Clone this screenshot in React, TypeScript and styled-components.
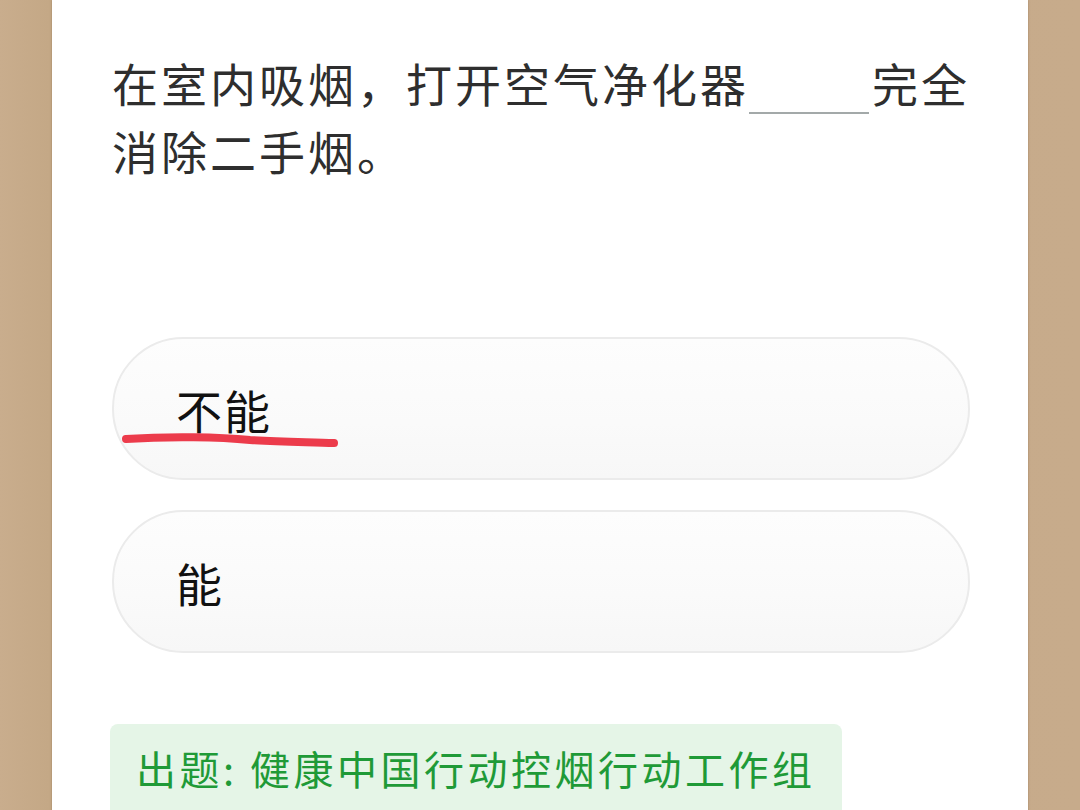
import React from "react";
import styled, { createGlobalStyle } from "styled-components";

const Global = createGlobalStyle`
  html, body { margin: 0; padding: 0; }
  body {
    background: #c7ab8b;
    font-family: "Noto Sans CJK SC", "Noto Sans", sans-serif;
    overflow: hidden;
  }
`;

const Page = styled.div`
  width: 1080px;
  height: 810px;
  display: flex;
  justify-content: center;
  background: linear-gradient(90deg, #c9ad8d 0%, #c4a886 4.5%, #c7ab8b 100%);
  overflow: hidden;
`;

const Panel = styled.main`
  width: 976px;
  height: 900px;
  box-sizing: border-box;
  background: #ffffff;
  padding: 48px 58px 0 60px;
  display: flex;
  flex-direction: column;
  box-shadow: 0 0 2px rgba(120, 90, 60, 0.5);
`;

const Question = styled.p`
  margin: 0 -12px 0 0;
  font-size: 46px;
  line-height: 68px;
  letter-spacing: 3px;
  color: #2e2e2e;
`;

const Blank = styled.span`
  display: inline-block;
  width: 120px;
  height: 2px;
  margin: 0 3px 0 0;
  background: #a3a9a9;
  vertical-align: -12px;
`;

const Options = styled.div`
  margin-top: 153px;
  display: flex;
  flex-direction: column;
  gap: 30px;
`;

const Option = styled.div`
  position: relative;
  height: 143px;
  box-sizing: border-box;
  border: 2px solid #ebebeb;
  border-radius: 72px;
  background: linear-gradient(180deg, #fdfdfd 0%, #fafafa 60%, #f7f7f7 100%);
  display: flex;
  align-items: center;
  padding-left: 62px;
  font-size: 46px;
  letter-spacing: 2px;
  color: #111111;
`;

const Mark = styled.svg`
  position: absolute;
  left: 6px;
  top: 94px;
  width: 230px;
  height: 24px;
  overflow: visible;
`;

const Source = styled.div`
  margin-top: 71px;
  margin-left: -2px;
  align-self: flex-start;
  background: #e5f5e7;
  border-radius: 8px;
  padding: 20px 26px 30px 26px;
  font-size: 40px;
  line-height: 48px;
  letter-spacing: 3.5px;
  color: #1f9a37;
`;

export default function App() {
  return (
    <>
      <Global />
      <Page>
        <Panel>
          <Question>
            在室内吸烟，打开空气净化器<Blank />完全消除二手烟。
          </Question>
          <Options>
            <Option>
              不能
              <Mark viewBox="0 0 230 24">
                <path
                  d="M6 6 C 50 3, 100 4, 130 7 C 160 9, 190 9, 214 10"
                  stroke="#ec3b4b"
                  strokeWidth="8"
                  strokeLinecap="round"
                  fill="none"
                />
              </Mark>
            </Option>
            <Option>能</Option>
          </Options>
          <Source>出题: 健康中国行动控烟行动工作组</Source>
        </Panel>
      </Page>
    </>
  );
}
